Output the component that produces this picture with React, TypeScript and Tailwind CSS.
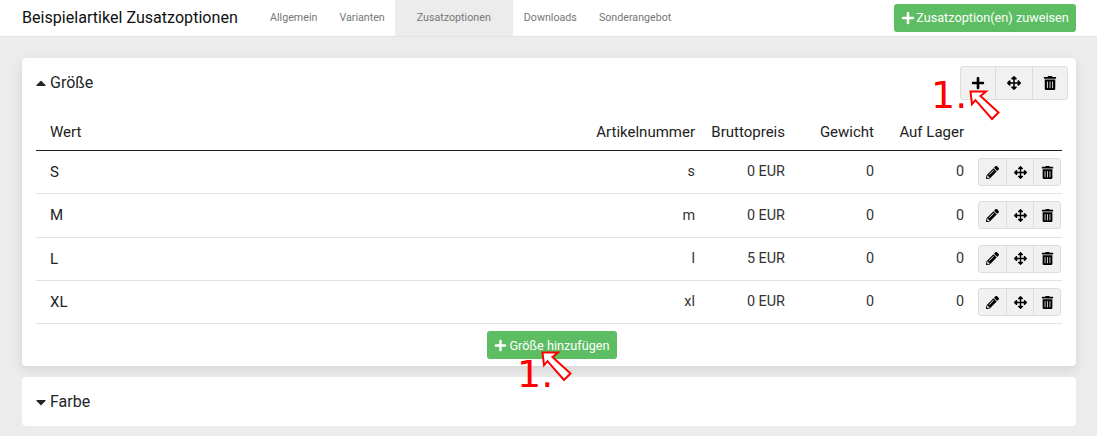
import React from 'react';
import { FaPlus, FaArrowsAlt, FaTrashAlt, FaPencilAlt, FaCaretUp, FaCaretDown } from 'react-icons/fa';

const rows = [
  { name: 'S', sku: 's', price: '0 EUR' },
  { name: 'M', sku: 'm', price: '0 EUR' },
  { name: 'L', sku: 'l', price: '5 EUR' },
  { name: 'XL', sku: 'xl', price: '0 EUR' },
];

const navItems = ['Allgemein', 'Varianten', 'Zusatzoptionen', 'Downloads', 'Sonderangebot'];

// red annotation from the screenshot: a "1." next to an outlined arrow
const Annotation = ({ textClass, arrowClass }: { textClass: string; arrowClass: string }) => (
  <>
    <span className={`absolute font-['DejaVu_Sans',sans-serif] text-[38px] leading-[40px] text-[#ff0000] ${textClass}`}>
      1.
    </span>
    <svg width="32" height="32" viewBox="0 0 32 32" className={`absolute ${arrowClass}`}>
      <path
        d="M1.5 1.5 L17 1.5 L11.5 6 L29.5 22.5 L23 29 L6.5 10.2 L3 14.2 Z"
        fill="#fff"
        stroke="#ff0000"
        strokeWidth="2"
      />
    </svg>
  </>
);

export default function App() {
  return (
    <div className="w-[1097px] h-[436px] overflow-hidden bg-[#ececec] font-['Roboto',sans-serif] text-[#212529]">
      {/* Top bar */}
      <div className="flex h-[37px] items-center bg-white pl-[22px] pr-[21px] border-b border-[#e4e4e4]">
        <div className="w-[237px] text-[16.1px] text-[#111]">Beispielartikel Zusatzoptionen</div>
        <div className="flex h-full flex-1">
          {navItems.map((item) => (
            <div
              key={item}
              className={
                item === 'Zusatzoptionen'
                  ? '-ml-px flex items-center bg-[#ececec] px-[22px] text-[10.7px] text-[#777]'
                  : 'flex items-center px-[11px] text-[10.7px] text-[#777]'
              }
            >
              {item}
            </div>
          ))}
        </div>
        <button className="flex h-[28px] w-[182px] items-center justify-center gap-[1px] rounded-[3px] bg-[#5cbd62] text-[12.7px] text-white">
          <FaPlus size={14} />
          Zusatzoption(en) zuweisen
        </button>
      </div>

      <div className="pl-[22px] pr-[21px] pt-[21px]">
        {/* Größe card */}
        <div className="relative h-[308px] rounded-[4px] bg-white pt-[8px] shadow-[0_4px_12px_rgba(0,0,0,0.1)]">
          <div className="flex items-start pr-[8px]">
            <div className="flex flex-1 items-center gap-[1px] pl-[11px] pt-[7px] text-[16px] leading-[19px]">
              <FaCaretUp size={16} />
              Größe
            </div>
            <div className="flex h-[34px] w-[108px] rounded-[3px] border border-[#ddd] bg-[#f1f1f1] text-black">
              <div className="flex w-[35px] items-center justify-center border-r border-[#ddd]"><FaPlus size={14} /></div>
              <div className="flex w-[37px] items-center justify-center border-r border-[#ddd]"><FaArrowsAlt size={14} /></div>
              <div className="flex flex-1 items-center justify-center"><FaTrashAlt size={14} /></div>
            </div>
          </div>

          <div className="mx-[14px] mt-[7px] text-[14.4px]">
            <div className="grid h-[44px] grid-cols-[1fr_150px_90px_89px_90px_98px] items-center border-b border-[#222] pl-[14px] pt-[8px] text-[15px] text-[#222]">
              <div>Wert</div>
              <div className="text-right">Artikelnummer</div>
              <div className="text-right">Bruttopreis</div>
              <div className="text-right">Gewicht</div>
              <div className="text-right">Auf Lager</div>
              <div />
            </div>
            {rows.map((row) => (
              <div
                key={row.name}
                className="grid h-[43.33px] grid-cols-[1fr_150px_90px_89px_90px_98px] items-center border-b border-[#e2e2e2] pl-[14px] text-[#333]"
              >
                <div className="text-[15px] text-[#222]">{row.name}</div>
                <div className="text-right">{row.sku}</div>
                <div className="text-right">{row.price}</div>
                <div className="text-right">0</div>
                <div className="text-right">0</div>
                <div className="flex justify-end pr-px">
                  <div className="flex h-[28px] w-[83px] rounded-[3px] border border-[#ddd] bg-[#f1f1f1] text-black">
                    <div className="flex w-[28px] items-center justify-center border-r border-[#ddd]"><FaPencilAlt size={13} /></div>
                    <div className="flex w-[27px] items-center justify-center border-r border-[#ddd]"><FaArrowsAlt size={13} /></div>
                    <div className="flex flex-1 items-center justify-center"><FaTrashAlt size={13} /></div>
                  </div>
                </div>
              </div>
            ))}
          </div>

          <div className="mt-[7px] flex justify-center pl-[6px]">
            <button className="flex h-[28px] w-[130px] items-center justify-center gap-[2px] rounded-[3px] bg-[#5cbd62] text-[12.7px] text-white">
              <FaPlus size={13} />
              Größe hinzufügen
            </button>
          </div>

          <Annotation textClass="left-[909px] top-[17px]" arrowClass="left-[947px] top-[32px]" />
          <Annotation textClass="left-[495px] top-[296px]" arrowClass="left-[519px] top-[293px]" />
        </div>

        {/* Farbe card */}
        <div className="mt-[11px] flex h-[49px] items-center gap-[1px] rounded-[4px] bg-white pl-[11px] text-[16px]">
          <FaCaretDown size={16} />
          Farbe
        </div>
      </div>
    </div>
  );
}
